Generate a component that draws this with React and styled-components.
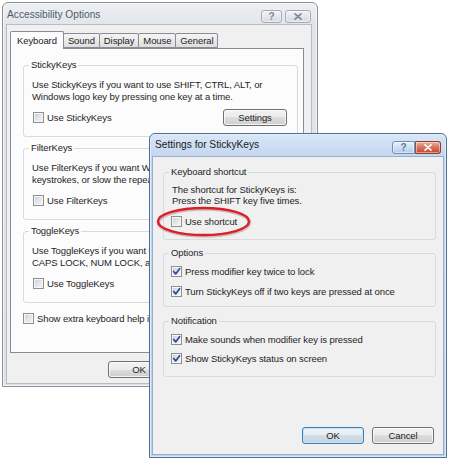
import React from "react";
import styled, { createGlobalStyle, css } from "styled-components";

const GlobalStyle = createGlobalStyle`
  html, body {
    margin: 0;
    padding: 0;
    background: #fff;
  }
  body {
    font-family: "Liberation Sans", Arial, sans-serif;
    font-size: 9.5px;
    letter-spacing: -0.1px;
    color: #1e1e1e;
  }
  * {
    box-sizing: border-box;
  }
`;

const Desktop = styled.div`
  position: relative;
  width: 450px;
  height: 461px;
  overflow: hidden;
  background: #fff;
`;

// windows sit on a free canvas, so they are placed by coordinates
const Window = styled.div`
  position: absolute;
  left: ${(p) => p.$x}px;
  top: ${(p) => p.$y}px;
  width: ${(p) => p.$w}px;
  height: ${(p) => p.$h}px;
  display: flex;
  flex-direction: column;
  padding-bottom: 3px;
  border: 1px solid ${(p) => (p.$active ? "#4d6f94" : "#8b9199")};
  border-radius: 6px 6px 0 0;
  background: ${(p) =>
    p.$active
      ? "linear-gradient(180deg, #d9e7f7 0px, #c3d7ef 22px, #bbd1ec 100%)"
      : "linear-gradient(180deg, #eef0f3 0px, #e1e5ea 22px, #dce1e7 100%)"};
  box-shadow: inset 0 0 0 1px
    ${(p) => (p.$active ? "rgba(235,243,252,0.7)" : "rgba(250,251,252,0.7)")};
`;

const TitleBar = styled.div`
  display: flex;
  align-items: flex-start;
  flex-shrink: 0;
  height: ${(p) => p.$h}px;
`;

const TitleText = styled.div`
  flex: 1;
  font-size: 10.2px;
  line-height: 12px;
  letter-spacing: 0;
  padding-top: ${(p) => p.$pt}px;
  padding-left: ${(p) => p.$pl}px;
  color: ${(p) => (p.$active ? "#1b1b1b" : "#4e5a68")};
  white-space: nowrap;
`;

const CaptionButtons = styled.div`
  display: flex;
  gap: ${(p) => p.$gap}px;
  margin-top: 7px;
  margin-right: ${(p) => p.$mr}px;
`;

const captionLooks = {
  inactive: css`
    border: 1px solid #a3aab4;
    border-radius: 3px;
    background: linear-gradient(180deg, #f1f3f6 0%, #e2e6eb 50%, #d6dce3 100%);
    color: #7b8491;
  `,
  help: css`
    border: 1px solid #6f8fb6;
    border-radius: 3px 0 0 3px;
    background: linear-gradient(180deg, #e6f0fa 0%, #cddff2 50%, #b5cce8 100%);
    color: #5e7896;
  `,
  close: css`
    border: 1px solid #8c3b2c;
    border-left-color: #7f5a58;
    border-radius: 0 3px 3px 0;
    background: linear-gradient(180deg, #eab0a2 0%, #d9725d 50%, #c4452c 100%);
    color: #fff;
  `,
};

const CaptionButton = styled.div`
  width: ${(p) => p.$w}px;
  height: 13px;
  display: flex;
  align-items: center;
  justify-content: center;
  font-size: 10px;
  font-weight: bold;
  line-height: 10px;
  box-shadow: inset 0 0 0 1px rgba(255, 255, 255, 0.45);
  ${(p) => captionLooks[p.$look]}
`;

const Client = styled.div`
  flex: 1;
  display: flex;
  flex-direction: column;
  margin: 0 ${(p) => p.$mr}px 0 ${(p) => p.$ml}px;
  padding: ${(p) => p.$pad};
  background: #f0f0f0;
  box-shadow: 0 0 0 1px ${(p) => (p.$active ? "#97afcb" : "#b7bdc5")};
`;

const TabStrip = styled.div`
  display: flex;
  align-items: flex-end;
  height: 17px;
  margin: 6px 0 0 3px;
`;

const Tab = styled.div`
  height: ${(p) => (p.$selected ? 18 : 15)}px;
  margin-bottom: ${(p) => (p.$selected ? -1 : 0)}px;
  margin-left: -1px;
  padding: 0 ${(p) => (p.$selected ? 6 : 4)}px;
  display: flex;
  align-items: center;
  border: 1px solid #898c95;
  border-bottom: ${(p) => (p.$selected ? "none" : "1px solid #898c95")};
  border-radius: 2px 2px 0 0;
  background: ${(p) =>
    p.$selected
      ? "#fcfcfc"
      : "linear-gradient(180deg, #f4f4f4 0%, #ebebeb 50%, #dedede 100%)"};
  position: relative;
  z-index: ${(p) => (p.$selected ? 1 : 0)};
  white-space: nowrap;

  &:first-child {
    margin-left: 0;
  }
`;

const TabPanel = styled.div`
  flex: 1;
  display: flex;
  flex-direction: column;
  gap: 5px;
  margin: 0 7px 0 3px;
  padding: 10px 5px 0 12px;
  border: 1px solid #898c95;
  background: #fcfcfc;
`;

const Group = styled.fieldset`
  margin: 0;
  min-width: 0;
  padding: ${(p) => p.$pt}px 10px ${(p) => p.$pb}px 7px;
  border: 1px solid #d5dbe1;
  border-radius: 3px;
  display: flex;
  flex-direction: column;
  gap: ${(p) => p.$gap || 0}px;
  margin-top: ${(p) => p.$mt || 0}px;
`;

const Legend = styled.legend`
  padding: 0 2px;
  margin-left: -2px;
  line-height: 12px;
  color: #1e1e1e;
`;

const Description = styled.div`
  line-height: ${(p) => p.$lh}px;
  white-space: nowrap;
  margin-left: 1px;
`;

const CheckRow = styled.div`
  position: relative;
  display: flex;
  align-items: center;
  gap: 3px;
  height: ${(p) => p.$h || 15}px;
  margin-top: ${(p) => p.$mt || 0}px;
  margin-left: ${(p) => p.$ml || 0}px;
  white-space: nowrap;
`;

const Box = styled.span`
  width: 11px;
  height: 11px;
  flex-shrink: 0;
  display: flex;
  align-items: center;
  justify-content: center;
  border: 1px solid #8e8f8f;
  background: linear-gradient(135deg, #c9cdd4 0%, #e4e7ea 55%, #f7f7f7 100%);
  box-shadow: inset 0 0 0 1px #f6f6f6;
`;

const Button = styled.div`
  width: ${(p) => p.$w || 62}px;
  height: 17px;
  display: flex;
  align-items: center;
  justify-content: center;
  border: 1px solid ${(p) => (p.$default ? "#3c7fb1" : "#707070")};
  border-radius: 3px;
  background: ${(p) =>
    p.$default
      ? "linear-gradient(180deg, #eef4f8 0%, #e5ecf2 50%, #d3dde6 50%, #c7d3de 100%)"
      : "linear-gradient(180deg, #f2f2f2 0%, #ebebeb 50%, #dddddd 50%, #cfcfcf 100%)"};
  box-shadow: inset 0 0 0 1px
    ${(p) => (p.$default ? "#c4e4f7" : "rgba(252,252,252,0.8)")};
  margin-left: ${(p) => (p.$push ? "auto" : "0")};
  flex-shrink: 0;
`;

const ButtonRow = styled.div`
  display: flex;
  justify-content: flex-end;
  gap: ${(p) => p.$gap}px;
  margin: ${(p) => p.$m};
`;

// red annotation ring drawn over the "Use shortcut" row
const Highlight = styled.svg`
  position: absolute;
  left: -15px;
  top: -8px;
  overflow: visible;
  pointer-events: none;
`;

function CloseGlyph({ color }) {
  return (
    <svg width="8" height="7" viewBox="0 0 8 7">
      <path
        d="M1 0.8 L7 6.2 M7 0.8 L1 6.2"
        stroke={color}
        strokeWidth="1.6"
        strokeLinecap="round"
      />
    </svg>
  );
}

function Check({ checked, label, children, ...rest }) {
  return (
    <CheckRow {...rest}>
      <Box>
        {checked && (
          <svg width="9" height="9" viewBox="0 0 9 9">
            <path
              d="M1.6 4.5 L3.7 6.9 L7.6 1.7"
              fill="none"
              stroke="#2d4b9e"
              strokeWidth="1.7"
              strokeLinecap="round"
              strokeLinejoin="round"
            />
          </svg>
        )}
      </Box>
      <span>{label}</span>
      {children}
    </CheckRow>
  );
}

const keyGroups = [
  {
    name: "StickyKeys",
    lines: [
      "Use StickyKeys if you want to use SHIFT, CTRL, ALT, or",
      "Windows logo key by pressing one key at a time.",
    ],
    button: "Settings",
  },
  {
    name: "FilterKeys",
    lines: [
      "Use FilterKeys if you want Windows to ignore brief or repeated",
      "keystrokes, or slow the repeat rate.",
    ],
  },
  {
    name: "ToggleKeys",
    lines: [
      "Use ToggleKeys if you want to hear tones when pressing",
      "CAPS LOCK, NUM LOCK, and SCROLL LOCK.",
    ],
  },
];

const tabs = ["Keyboard", "Sound", "Display", "Mouse", "General"];

export default function App() {
  return (
    <>
      <GlobalStyle />
      <Desktop>
        <Window $x={2} $y={2} $w={316} $h={385}>
          <TitleBar $h={22}>
            <TitleText $pt={6} $pl={4}>
              Accessibility Options
            </TitleText>
            <CaptionButtons $gap={3} $mr={6}>
              <CaptionButton $w={21} $look="inactive">
                ?
              </CaptionButton>
              <CaptionButton $w={26} $look="inactive">
                <CloseGlyph color="#7b8491" />
              </CaptionButton>
            </CaptionButtons>
          </TitleBar>
          <Client $ml={4} $mr={6} $pad="0">
            <TabStrip>
              {tabs.map((t, i) => (
                <Tab key={t} $selected={i === 0}>
                  {t}
                </Tab>
              ))}
            </TabStrip>
            <TabPanel>
              {keyGroups.map((g) => (
                <Group key={g.name} $pt={8} $pb={10}>
                  <Legend>{g.name}</Legend>
                  <Description $lh={12}>
                    {g.lines[0]}
                    <br />
                    {g.lines[1]}
                  </Description>
                  <Check label={`Use ${g.name}`} $h={17} $mt={6} $ml={2}>
                    {g.button && (
                      <Button $w={64} $push>
                        {g.button}
                      </Button>
                    )}
                  </Check>
                </Group>
              ))}
              <Check label="Show extra keyboard help in programs" $mt={3} />
            </TabPanel>
            <ButtonRow $gap={6} $m="8px 5px 5px 0">
              <Button>OK</Button>
              <Button>Cancel</Button>
              <Button>Apply</Button>
            </ButtonRow>
          </Client>
        </Window>

        <Window $x={149} $y={133} $w={298} $h={325} $active>
          <TitleBar $h={23}>
            <TitleText $pt={5} $pl={5} $active>
              Settings for StickyKeys
            </TitleText>
            <CaptionButtons $gap={0} $mr={5}>
              <CaptionButton $w={23} $look="help">
                ?
              </CaptionButton>
              <CaptionButton $w={26} $look="close">
                <CloseGlyph color="#fff" />
              </CaptionButton>
            </CaptionButtons>
          </TitleBar>
          <Client $ml={3} $mr={3} $pad="9px 7px 10px 10px" $active>
            <Group $pt={6} $pb={10}>
              <Legend>Keyboard shortcut</Legend>
              <Description $lh={11}>
                The shortcut for StickyKeys is:
                <br />
                Press the SHIFT key five times.
              </Description>
              <Check label="Use shortcut" $mt={8}>
                <Highlight width="95" height="31" viewBox="0 0 95 31">
                  <ellipse
                    cx="48"
                    cy="16.5"
                    rx="45.5"
                    ry="13.5"
                    fill="none"
                    stroke="rgba(110,0,0,0.22)"
                    strokeWidth="3.5"
                  />
                  <ellipse
                    cx="47.5"
                    cy="15.5"
                    rx="45.5"
                    ry="13.5"
                    fill="none"
                    stroke="#d8212a"
                    strokeWidth="2.4"
                  />
                </Highlight>
              </Check>
            </Group>
            <Group $pt={5} $pb={7} $gap={5} $mt={7}>
              <Legend>Options</Legend>
              <Check checked label="Press modifier key twice to lock" />
              <Check
                checked
                label="Turn StickyKeys off if two keys are pressed at once"
              />
            </Group>
            <Group $pt={5} $pb={10} $gap={4} $mt={8}>
              <Legend>Notification</Legend>
              <Check checked label="Make sounds when modifier key is pressed" />
              <Check checked label="Show StickyKeys status on screen" />
            </Group>
            <ButtonRow $gap={8} $m="auto 2px 0 0">
              <Button $default>OK</Button>
              <Button>Cancel</Button>
            </ButtonRow>
          </Client>
        </Window>
      </Desktop>
    </>
  );
}
